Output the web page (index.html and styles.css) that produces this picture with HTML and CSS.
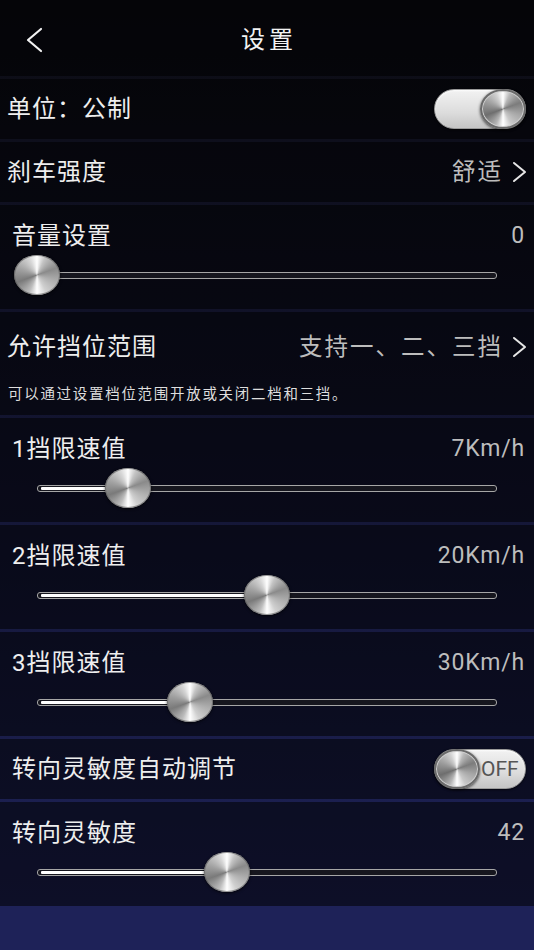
FILE: index.html
```html
<!DOCTYPE html>
<html lang="zh-CN">
<head>
<meta charset="utf-8">
<title>设置</title>
<link rel="stylesheet" href="styles.css">
</head>
<body>
<div class="screen">
  <header class="topbar">
    <span class="back">
      <svg width="20" height="26" viewBox="0 0 20 26"><polyline points="16,2 3,13 16,24" fill="none" stroke="#f2f2f2" stroke-width="2.2" stroke-linecap="round" stroke-linejoin="round"/></svg>
    </span>
    <h1 class="title">设置</h1>
  </header>

  <div class="row row-simple">
    <span class="label">单位：公制</span>
    <span class="switch on"><span class="knob"></span></span>
  </div>

  <div class="row row-simple">
    <span class="label">刹车强度</span>
    <span class="value-link">
      <span class="value">舒适</span>
      <svg class="chev" width="16" height="22" viewBox="0 0 16 22"><polyline points="3,2 14,11 3,20" fill="none" stroke="#e6e6e6" stroke-width="2" stroke-linecap="round" stroke-linejoin="round"/></svg>
    </span>
  </div>

  <div class="row row-slider">
    <div class="slider-head"><span class="label">音量设置</span><span class="value num">0</span></div>
    <div class="slider">
      <div class="track"><div class="fill" style="width:0%"></div></div>
      <span class="thumb" style="left:0%"></span>
    </div>
  </div>

  <div class="row row-range">
    <div class="range-head">
      <span class="label">允许挡位范围</span>
      <span class="value-link">
        <span class="value">支持一、二、三挡</span>
        <svg class="chev" width="16" height="22" viewBox="0 0 16 22"><polyline points="3,2 14,11 3,20" fill="none" stroke="#e6e6e6" stroke-width="2" stroke-linecap="round" stroke-linejoin="round"/></svg>
      </span>
    </div>
    <p class="hint">可以通过设置档位范围开放或关闭二档和三挡。</p>
  </div>

  <div class="row row-slider">
    <div class="slider-head"><span class="label">1挡限速值</span><span class="value num">7Km/h</span></div>
    <div class="slider">
      <div class="track"><div class="fill" style="width:19.8%"></div></div>
      <span class="thumb" style="left:19.8%"></span>
    </div>
  </div>

  <div class="row row-slider">
    <div class="slider-head"><span class="label">2挡限速值</span><span class="value num">20Km/h</span></div>
    <div class="slider">
      <div class="track"><div class="fill" style="width:50%"></div></div>
      <span class="thumb" style="left:50%"></span>
    </div>
  </div>

  <div class="row row-slider">
    <div class="slider-head"><span class="label">3挡限速值</span><span class="value num">30Km/h</span></div>
    <div class="slider">
      <div class="track"><div class="fill" style="width:33.3%"></div></div>
      <span class="thumb" style="left:33.3%"></span>
    </div>
  </div>

  <div class="row row-simple row-indent">
    <span class="label">转向灵敏度自动调节</span>
    <span class="switch off"><span class="knob"></span><span class="off-text">OFF</span></span>
  </div>

  <div class="row row-slider">
    <div class="slider-head"><span class="label">转向灵敏度</span><span class="value num">42</span></div>
    <div class="slider">
      <div class="track"><div class="fill" style="width:41.3%"></div></div>
      <span class="thumb" style="left:41.3%"></span>
    </div>
  </div>

  <div class="footer"></div>
</div>
</body>
</html>
```

FILE: styles.css
```css
* { box-sizing: border-box; }

html, body {
  margin: 0;
  padding: 0;
  background: #1e2258;
}

body {
  font-family: Roboto, "Noto Sans CJK SC", sans-serif;
  color: #eeeeee;
}

.screen {
  width: 534px;
  height: 950px;
  display: flex;
  flex-direction: column;
  gap: 3px;
  background: linear-gradient(180deg, #0c0c12 0px, #131532 450px, #1e2258 905px, #1e2258 950px);
  overflow: hidden;
}

.topbar {
  height: 76px;
  flex: none;
  display: flex;
  align-items: center;
  justify-content: center;
  position: relative;
  background: rgba(0, 0, 0, 0.55);
}

.back {
  position: absolute;
  left: 25px;
  top: 27px;
  width: 20px;
  height: 26px;
  display: block;
}

.back svg { display: block; }

.title {
  margin: 0;
  font-size: 24px;
  font-weight: 400;
  letter-spacing: 4px;
  padding-left: 4px;
  margin-top: -2px;
  color: #f2f2f2;
}

.row {
  flex: none;
  background: rgba(0, 0, 0, 0.55);
}

.label {
  font-size: 24px;
  letter-spacing: 1px;
  color: #eeeeee;
  line-height: 26px;
  white-space: nowrap;
}

.value {
  font-size: 23.5px;
  letter-spacing: 2px;
  color: #bdbdbd;
  line-height: 26px;
  white-space: nowrap;
}

.value.num {
  font-size: 23px;
  letter-spacing: 0.8px;
  margin-right: -1px;
}

.row-simple {
  height: 60px;
  display: flex;
  align-items: center;
  justify-content: space-between;
  padding: 0 9px 0 7px;
}

.row-indent { padding-left: 12px; }

.value-link {
  display: flex;
  align-items: center;
  gap: 8px;
  margin-right: -2px;
}

.chev { display: block; }

.switch {
  width: 92px;
  height: 40px;
  border-radius: 20px;
  background: linear-gradient(180deg, #f2f2f2 0%, #dcdcdc 60%, #c4c4c4 100%);
  border: 1px solid #9a9a9a;
  display: flex;
  align-items: center;
  box-shadow: inset 0 1px 2px rgba(255,255,255,0.8), 0 1px 2px rgba(0,0,0,0.6);
  flex: none;
  margin-right: -1px;
}

.switch.on { justify-content: flex-end; }
.switch.off { justify-content: flex-start; }

.knob {
  width: 46px;
  height: 40px;
  border-radius: 50%;
  border: 2px solid #6a6a6a;
  background: conic-gradient(from 0deg,
    #ffffff 0deg, #b8b8b8 25deg, #7c7c7c 70deg, #a8a8a8 110deg, #c8c8c8 150deg,
    #ffffff 180deg, #b4b4b4 205deg, #6e6e6e 250deg, #9a9a9a 290deg, #d0d0d0 335deg, #ffffff 360deg);
  box-shadow: inset 0 0 0 1px #cfcfcf, 0 1px 3px rgba(0,0,0,0.7);
  flex: none;
}

.switch.on .knob { margin-right: -1px; }
.switch.off .knob { margin-left: -1px; }

.off-text {
  font-family: Roboto, sans-serif;
  font-size: 21px;
  font-weight: 400;
  color: #555555;
  margin-left: 1px;
}

.row-slider {
  height: 104px;
  padding: 18px 10px 0 12px;
}

.slider-head {
  display: flex;
  justify-content: space-between;
  align-items: center;
  height: 26px;
}

.slider {
  position: relative;
  height: 40px;
  margin: 6px 27px 0 25px;
  display: flex;
  align-items: center;
}

.track {
  width: 100%;
  height: 7px;
  border: 1px solid #a6a6a6;
  border-radius: 3px;
  background: #16161e;
  padding: 1px 1px 1px 3px;
  display: flex;
  align-items: center;
}

.fill {
  height: 3px;
  background: #ffffff;
  border-radius: 1px;
}

.thumb {
  position: absolute;
  top: 0;
  width: 46px;
  height: 40px;
  margin-left: -23px;
  border-radius: 50%;
  background: conic-gradient(from 0deg,
    #ffffff 0deg, #c4c4c4 25deg, #8a8a8a 70deg, #b0b0b0 110deg, #cfcfcf 150deg,
    #ffffff 180deg, #bcbcbc 205deg, #7a7a7a 250deg, #a2a2a2 290deg, #d6d6d6 335deg, #ffffff 360deg);
  box-shadow: inset 0 0 0 1px rgba(90,90,90,0.6), 0 1px 3px rgba(0,0,0,0.7);
}

.row-range {
  height: 103px;
  padding: 22px 9px 0 7px;
}

.range-head {
  display: flex;
  justify-content: space-between;
  align-items: center;
  height: 26px;
}

.hint {
  margin: 26px 0 0 1px;
  font-size: 14.5px;
  letter-spacing: 1.7px;
  line-height: 18px;
  color: #dedede;
  white-space: nowrap;
}

.footer {
  flex: 1;
  background: #1e2258;
  margin-top: -3px;
}
```
